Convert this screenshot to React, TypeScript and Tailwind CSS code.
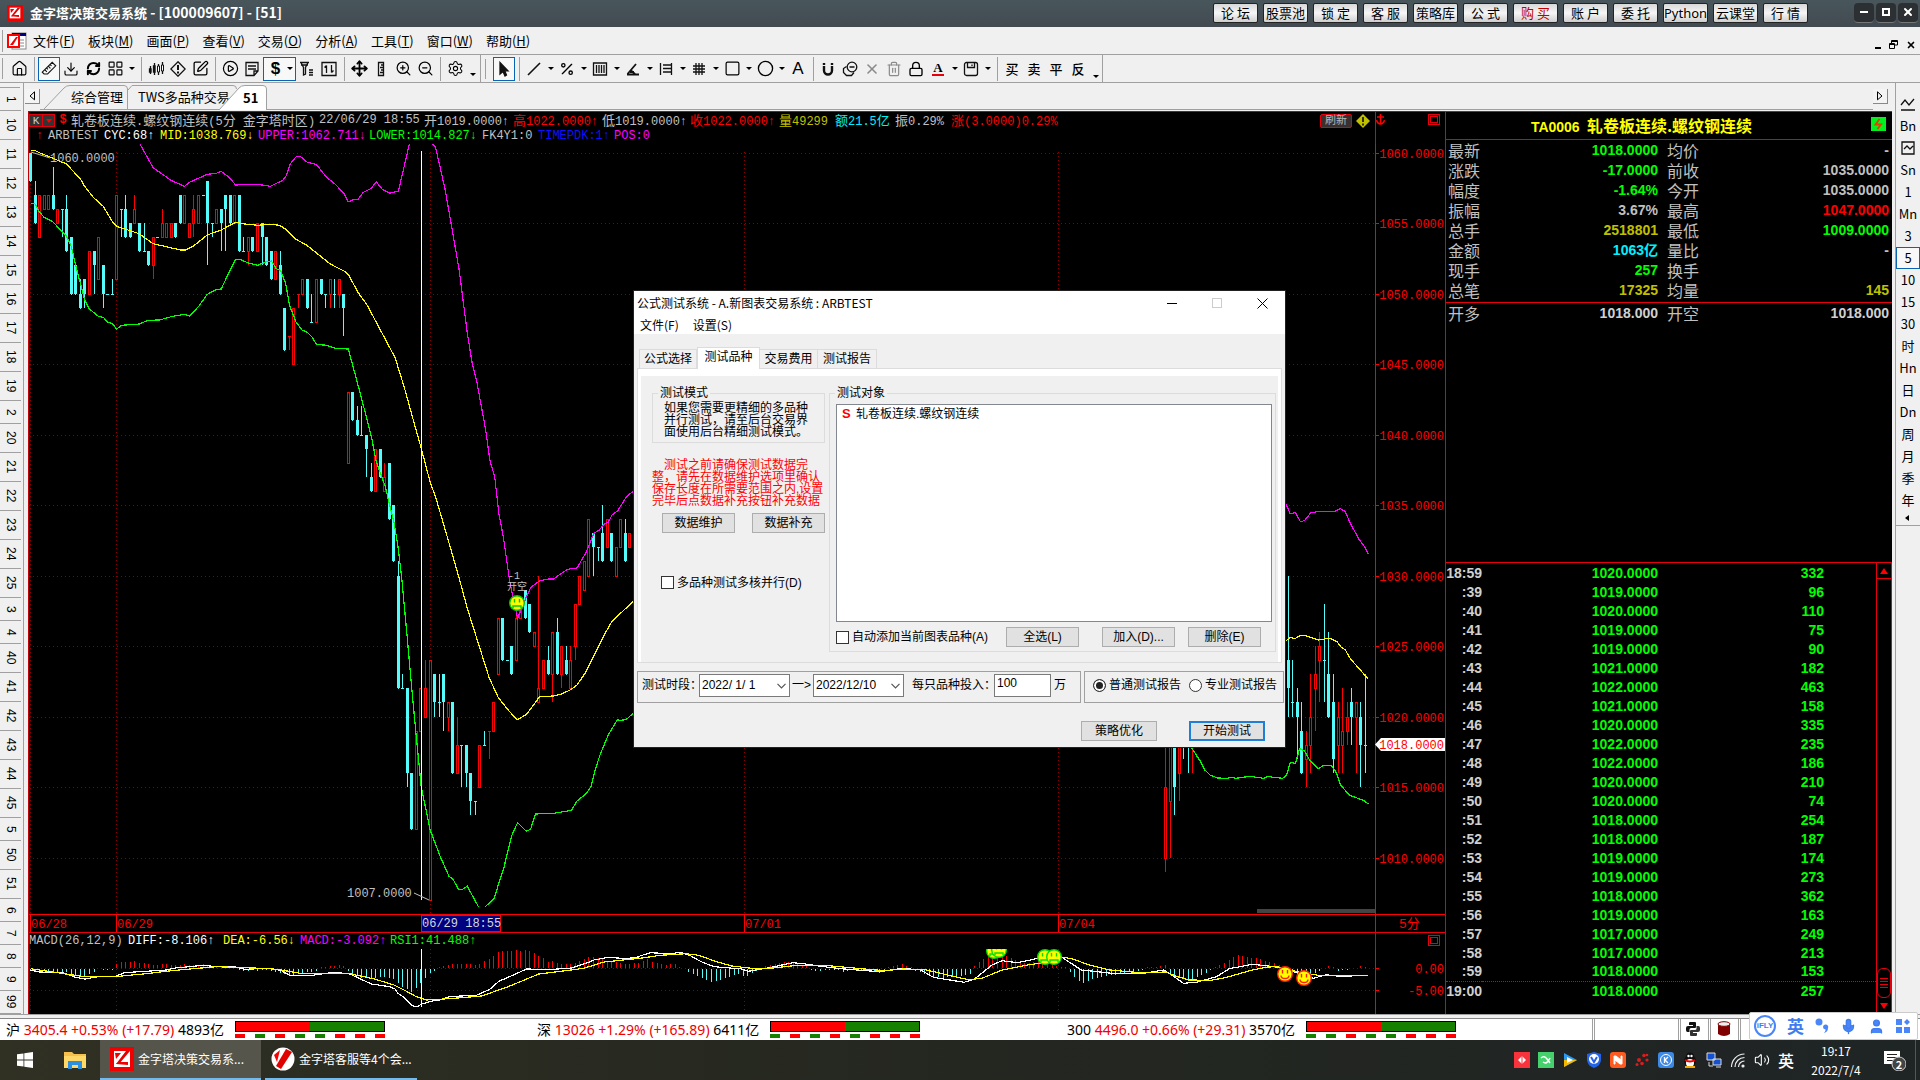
import React from 'react';
import {
  Home, Download, RefreshCw, LayoutGrid, SquarePen, CirclePlay, StickyNote, Move,
  ZoomIn, ZoomOut, Settings, Percent, Trash2, Lock, Square, Circle, X, Mic, User, Volume2,
} from 'lucide-react';

const SANS = "font-['Noto_Sans_CJK_SC',sans-serif]";
const MONO = "font-['Liberation_Mono','Noto_Sans_CJK_SC',monospace]";

/* ---------- helpers ---------- */

function Mixed({ text }: { text: string }) {
  return (
    <>
      {text.split(/([\u4e00-\u9fff]+)/).map((p, i) =>
        i % 2 ? (
          <span key={i} className="font-['Noto_Sans_CJK_SC',sans-serif] text-[13px]">{p}</span>
        ) : (
          <span key={i}>{p}</span>
        ),
      )}
    </>
  );
}

const Caret = () => (
  <svg viewBox="0 0 6 3" className="h-[3px] w-1.5"><path d="M0 0H6L3 3Z" fill="#000" /></svg>
);

function AppLogo({ className }: { className: string }) {
  return (
    <svg viewBox="0 0 24 24" className={className} aria-hidden="true">
      <rect width="24" height="24" fill="#f00000" />
      <rect x="4" y="4" width="16" height="16" fill="#fff" />
      <path d="M6 17 L16 4 L20 4 L9 17Z" fill="#e00000" />
      <path d="M5 6 L11 6 L6 12Z M6 17 L9 15 L18 15 L18 18Z" fill="#f00000" />
    </svg>
  );
}

/* ---------- title bar ---------- */

const quick = ['论 坛', '股票池', '锁 定', '客 服', '策略库', '公 式', '购 买', '账 户', '委 托', 'Python', '云课堂', '行 情'];

function TitleBar() {
  return (
    <header className="flex h-[27px] shrink-0 items-center bg-gradient-to-b from-[#48565c] to-[#424a50] pb-0.5 pl-[7px] text-white">
      <AppLogo className="size-4" />
      <h1 className="ml-[7px] whitespace-pre text-[13px] font-bold">
        金字塔决策交易系统<span className="text-[14px]"> - [100009607] - [51]</span>
      </h1>
      <nav className="ml-auto flex gap-[5px]">
        {quick.map((q) => (
          <button
            key={q}
            className={`h-5 w-[45px] whitespace-pre rounded-[2px] border border-[#222] bg-gradient-to-b from-[#d8d8d8] via-[#f6f6f6] to-[#cfcfcf] text-[13px] leading-4 ${q === 'Python' ? "font-['Noto_Sans'] text-[12px]" : ''} ${q === '购 买' ? 'text-[#c00000]' : 'text-black'}`}
          >
            {q}
          </button>
        ))}
      </nav>
      <div className="ml-[46px] mr-0.5 flex gap-0.5">
        <button aria-label="最小化" className="flex size-5 items-center justify-center rounded-[4px] border-b border-[#777] bg-[#2c3032]"><i className="h-0.5 w-2 bg-white" /></button>
        <button aria-label="最大化" className="flex size-5 items-center justify-center rounded-[4px] border-b border-[#777] bg-[#2c3032]"><i className="size-2 border-2 border-white" /></button>
        <button aria-label="关闭" className="flex size-5 items-center justify-center rounded-[4px] border-b border-[#777] bg-[#2c3032]"><X size={12} strokeWidth={4} /></button>
      </div>
    </header>
  );
}

/* ---------- menu ---------- */

const menus = [['文件', 'F'], ['板块', 'M'], ['画面', 'P'], ['查看', 'V'], ['交易', 'O'], ['分析', 'A'], ['工具', 'T'], ['窗口', 'W'], ['帮助', 'H']];

function MenuBar() {
  return (
    <nav className="flex h-[27px] shrink-0 items-center bg-[#f0f0f0] pl-0.5 text-[13px] text-black">
      <i className="h-[22px] w-px bg-[#a0a0a0]" />
      <svg viewBox="0 0 20 18" className="ml-1 mr-1.5 h-[18px] w-5">
        <rect x="5" y="1" width="14" height="16" fill="#fff" stroke="#888" /><rect x="5" y="1" width="14" height="3" fill="#000080" />
        <path d="M13 8h4M13 11h4M13 14h4" stroke="#888" />
        <rect x="1" y="3" width="11" height="12" fill="#fff" stroke="#f00" strokeWidth="2" /><path d="M3 13L9 5h2L6 13Z" fill="#e00" />
      </svg>
      <div className="flex gap-[13px]">
        {menus.map(([t, k]) => (
          <button key={k}>{t}(<u>{k}</u>)</button>
        ))}
      </div>
      <div className="ml-auto mr-1 mt-2 flex items-center gap-2">
        <i className="mt-1.5 h-0.5 w-[6px] bg-black" />
        <svg viewBox="0 0 9 9" className="size-[9px]" fill="none" stroke="#000"><path d="M2.500 3V.5H8.500V5H6M2.500 1.500H8.500M.5 3.500h5v5h-5zM.5 4.500h5" /></svg>
        <X size={10} strokeWidth={4} />
      </div>
    </nav>
  );
}

/* ---------- tool bar ---------- */

const ic = 'size-[17px]';
const G = ({ children, fill = 'none', stroke = '#111' }: { children: React.ReactNode; fill?: string; stroke?: string }) => (
  <svg viewBox="0 0 16 16" className="size-4" fill={fill} stroke={stroke} strokeWidth="1.300">{children}</svg>
);

function Tool({ label, children, on }: { label: string; children: React.ReactNode; on?: boolean }) {
  return (
    <button aria-label={label} className={`flex h-6 w-[22px] shrink-0 items-center justify-center ${on ? 'border border-[#0a64b4] bg-[#f8f8f8]' : ''}`}>
      {children}
    </button>
  );
}
const Drop = () => <button aria-label="展开" className="flex h-6 w-[11px] shrink-0 items-center justify-center"><Caret /></button>;
const Sep = () => <span className="flex w-2 shrink-0 justify-center"><i className="h-6 w-px bg-[#a0a0a0]" /></span>;

function ToolBar() {
  return (
    <div className="flex h-[29px] shrink-0 items-center border-y border-[#a0a0a0] bg-[#f0f0f0] text-black">
      <span className="w-2 pl-0.5"><i className="block h-[21px] w-px bg-[#a0a0a0]" /></span>
      <Tool label="主页"><Home className={ic} strokeWidth={1.6} /></Tool>
      <Sep />
      <Tool label="画线" on><G><g transform="rotate(-45 8 8)" strokeWidth="1.100"><path d="M1 5.500h14v5H3.500L1 8zM4.500 5.500v3M7 5.500v2M9.500 5.500v3M12 5.500v2" /></g></G></Tool>
      <Tool label="下载"><Download className="size-4" strokeWidth={1.7} /></Tool>
      <Tool label="刷新"><RefreshCw className="size-[15px]" strokeWidth={3.2} /></Tool>
      <Tool label="布局"><LayoutGrid className={ic} strokeWidth={1.6} /></Tool>
      <Drop /><Sep />
      <Tool label="K线"><G fill="#111"><path d="M2.500 5v8M6.500 2v12M10.500 3v11M14.500 1v12" /><path d="M1.500 8h1.500v3h-1.500zM5.500 5h1.500v6h-1.500z" /><path d="M9.500 5h2v6h-2zM13.500 4h2v6h-2z" fill="#fff" strokeWidth="1" /></G></Tool>
      <Tool label="预警"><G><path d="M8 .8L15.200 8 8 15.200.8 8z" /><path d="M8 4v5M8 10.500v2" strokeWidth="2" /></G></Tool>
      <Tool label="编辑"><SquarePen className={ic} strokeWidth={1.8} /></Tool>
      <Sep />
      <Tool label="回放"><CirclePlay className={ic} strokeWidth={1.7} /></Tool>
      <Tool label="便笺"><G><path d="M2 1.500h12V10l-4 4.500H2zM4 5h8M4 8h8M14 10h-4v4" /></G></Tool>
      <div className="flex h-6 w-[33px] items-center border border-[#0a64b4] bg-[#f8f8f8]">
        <button className="w-[23px] font-['Liberation_Sans'] text-[17px] font-bold leading-5">$</button><Caret />
      </div>
      <Tool label="筛选"><G><path d="M1 1.500h9M2 4h7M2 1.500l2.500 5V14l2-1V6.500L9 1.500M10 9h4M10 11.500h4M10 14h4" /></G></Tool>
      <Tool label="排序"><G><path d="M1 1.500h14v13H1zM5.500 12V4.500M3.500 6.500l2-2M10.500 4v7.500M12.500 9.500l-2 2" /></G></Tool>
      <Sep />
      <Tool label="移动"><Move className={ic} strokeWidth={2.600} /></Tool>
      <Tool label="标尺"><G><path d="M5.500 1.500h5v13h-5zM8 4h2.500M7 6.500h3.500M8 9h2.500M7 11.500h3.500" /></G></Tool>
      <Tool label="放大"><ZoomIn className={ic} strokeWidth={1.7} /></Tool>
      <Tool label="缩小"><ZoomOut className={ic} strokeWidth={1.7} /></Tool>
      <Sep />
      <Tool label="设置"><Settings className={ic} strokeWidth={1.5} /></Tool>
      <span className="flex w-[14px] justify-center pt-3"><Caret /></span>
      <span className="flex w-[13px] gap-1"><i className="h-7 w-px bg-[#a0a0a0]" /><i className="mt-1 h-5 w-px bg-[#a0a0a0]" /></span>
      <Tool label="选择" on><G fill="#111"><path d="M4 1.500V13l3-2.500L9 15l1.500-1L8.700 9.800H12z" /></G></Tool>
      <Sep />
      <Tool label="直线"><G><path d="M2 14L14 2" strokeWidth="1.600" /></G></Tool><Drop />
      <Tool label="百分比"><Percent className="size-4" strokeWidth={2} /></Tool><Drop />
      <Tool label="周期线"><G><path d="M1.500 2h13v12h-13zM4.500 4v8M7 4v8M9.500 4v8M12 4v8" /></G></Tool><Drop />
      <Tool label="角度"><G><path d="M2 13.500h12M2.500 13L11 3M6 9.500l4 3.500M5 11h4" strokeWidth="1.800" /></G></Tool><Drop />
      <Tool label="区间"><G><path d="M2.500 2v12M13.500 2v12M5 4h8M5 7.500h8M5 11h8" /></G></Tool><Drop />
      <Tool label="网格"><G><path d="M5 2v12M8 2v12M11 2v12M2 5h12M2 8h12M2 11h12" /></G></Tool><Drop />
      <Tool label="矩形"><Square className={ic} strokeWidth={1.700} /></Tool><Drop />
      <Tool label="圆形"><Circle className={ic} strokeWidth={1.900} /></Tool><Drop />
      <Tool label="文字"><span className="font-['Liberation_Sans'] text-[17px]">A</span></Tool>
      <Sep />
      <Tool label="磁铁"><G><path d="M4 5v4.500a4 4 0 008 0V5M4 2v2M12 2v2" strokeWidth="2.400" /></G></Tool>
      <Tool label="复制"><G><circle cx="10" cy="6" r="4.800" /><path d="M4.500 5.500l-3 2v4l3 3h5l2.500-3M7.500 6h5" /></G></Tool>
      <Tool label="删除"><X className="size-4 text-[#8a8a8a]" strokeWidth={2.400} /></Tool>
      <Tool label="清空"><Trash2 className="size-4 text-[#8a8a8a]" strokeWidth={1.800} /></Tool>
      <Tool label="锁定"><Lock className="size-4" strokeWidth={2} /></Tool>
      <Tool label="颜色"><span className="border-b-2 border-red-600 px-px font-['Liberation_Serif'] text-[13px] font-bold leading-3">A</span></Tool><Drop />
      <Tool label="保存"><G><rect x="1.500" y="1.500" width="13" height="13" rx="2" /><path d="M4.500 2v4.500h7V2M9 3.500v1.500" /></G></Tool><Drop />
      <Sep />
      {['买', '卖', '平', '反'].map((t) => (
        <button key={t} className="w-[22px] text-[13px] font-medium">{t}</button>
      ))}
      <span className="flex h-7 w-[14px] justify-center border-r border-[#a0a0a0] pt-5"><Caret /></span>
    </div>
  );
}

/* ---------- left and right strips ---------- */

const leftNums = ['1', '10', '11', '12', '13', '14', '15', '16', '17', '18', '19', '2', '20', '21', '22', '23', '24', '25', '3', '4', '40', '41', '42', '43', '44', '45', '5', '50', '51', '6', '7', '8', '9', '99'];

function LeftStrip() {
  return (
    <aside className="flex w-6 shrink-0 flex-col overflow-hidden border-r border-[#a0a0a0] bg-[#f0f0f0] pt-1 text-black">
      <i className="h-px w-5 shrink-0 bg-[#a0a0a0]" />
      {leftNums.map((n) => (
        <button
          key={n}
          className={`flex w-[21px] shrink-0 items-center justify-center border-b border-[#a0a0a0] font-['Liberation_Sans'] text-[12px] [writing-mode:vertical-rl] ${n.length > 1 && n !== '99' ? 'h-[29px]' : 'h-[23px]'}`}
        >
          {n}
        </button>
      ))}
    </aside>
  );
}

const rightItems = ['~', 'Bn', '#', 'Sn', '1', 'Mn', '3', '5', '10', '15', '30', '时', 'Hn', '日', 'Dn', '周', '月', '季', '年'];

function RightStrip() {
  return (
    <aside className="w-6 shrink-0 bg-[#f0f0f0] text-black">
      <div className="flex flex-col border-b border-[#a0a0a0] pb-1 pt-[10px]">
        {rightItems.map((t) => (
          <button
            key={t}
            className={`flex h-[22px] items-center justify-center text-[13px] ${t === '5' ? 'border border-[#0a64b4] bg-[#f8f8f8]' : ''}`}
          >
            {t === '~' ? <G><path d="M1 9l4-5 4 5 5-6M1 14h14" /></G> : t === '#' ? <svg viewBox="0 0 14 14" className="size-3.5" fill="none" stroke="#111" strokeWidth="1.300"><path d="M1 1h12v12H1zM3 8l3-3 3 3 3-3" /></svg> : t}
          </button>
        ))}
        <svg viewBox="0 0 4 6" className="ml-[9px] mt-1 h-1.5 w-1"><path d="M4 0v6L0 3z" /></svg>
      </div>
    </aside>
  );
}

/* ---------- tabs ---------- */

function TabRow() {
  return (
    <div className="flex h-[27px] shrink-0 items-end bg-[#f0f0f0] text-black">
      <button aria-label="向左" className="mb-1.5 ml-px flex size-[15px] items-center justify-center border-b border-r border-[#888] bg-[#f4f4f4]">
        <svg viewBox="0 0 6 10" className="h-2.5 w-1.5" fill="none" stroke="#000"><path d="M5.500.8v8L1 5z" /></svg>
      </button>
      <div className="flex flex-1 items-end border-b border-[#a0a0a0] pl-1">
        <button className="relative h-6 w-[84px] pl-[27px] text-left text-[13px]">
          <svg viewBox="0 0 84 24" className="absolute inset-0 size-full" fill="none" stroke="#a0a0a0"><path d="M0 24L20 3Q22 .5 26 .5H80Q83.500.5 83.500 4V24" /></svg>
          <span className="relative whitespace-nowrap">综合管理</span>
        </button>
        <button className="relative h-6 w-[110px] pl-2.5 text-left text-[13px]">
          <svg viewBox="0 0 110 24" className="absolute inset-0 size-full" fill="none" stroke="#a0a0a0"><path d="M0 5L4 .5H105Q108.500.5 108.500 4" /></svg>
          <span className="relative whitespace-nowrap">TWS多品种交易</span>
        </button>
        <button className="relative -mb-px -ml-[19px] h-[25px] w-12 pl-6 text-left text-[13px] font-bold">
          <svg viewBox="0 0 48 25" className="absolute inset-0 size-full" fill="#fff" stroke="#a0a0a0"><path d="M0 25L20 3Q22 .5 26 .5H44Q47.500.5 47.500 4V25" /></svg>
          <span className="relative">51</span>
        </button>
      </div>
      <button aria-label="向右" className="mb-1.5 mr-[7px] flex size-[15px] items-center justify-center border-b border-r border-[#888] bg-[#f4f4f4]">
        <svg viewBox="0 0 6 10" className="h-2.5 w-1.5" fill="none" stroke="#000"><path d="M.5.8v8L5 5z" /></svg>
      </button>
    </div>
  );
}

/* ---------- chart data ---------- */

/* kind (c falling, r rising), high, body top, body bottom, low; prices minus 1000 */
const candlesA = `c60 60 58 58,c58 57 55 55,r57 57 54 54,r57 57 56 56,r57 57 56 56,c59 57 56 56,r56 56 55 55,c56 56 56 54,c57 56 53 53,c54 54 50 50,
c52 52 50 50,c51 50 49 49,c51 51 50 49,r53 53 50 50,c53 53 52 50,r54 54 51 51,c52 52 50 49,c50 50 50 50,c51 50 50 50,r57 57 51 51,
c56 56 56 54,c57 56 54 54,c55 55 54 54,r57 56 55 55,c55 55 53 53,c55 53 53 53,c53 53 52 52,r54 54 52 51,c54 54 54 54,r56 55 54 54,
r55 55 54 54,r55 55 54 54,c55 55 54 54,c57 57 55 55,r57 57 55 55,r55 55 54 54,r57 56 55 54,r57 57 55 55,c57 57 57 57,c58 58 55 52,
c55 55 55 54,r56 56 55 55,c56 56 55 53,c57 57 56 53,c57 57 55 55,r57 57 55 55,c57 57 53 53,c54 53 53 53,r54 54 53 52,c54 54 53 53,
r55 55 53 53,c55 55 54 52,c54 54 52 52,c53 53 51 51,r53 53 51 51,c53 52 50 50,c49 49 46 46,r47 47 47 46,r49 49 45 45,r50 50 50 49,
r51 51 50 50,c51 51 49 49,c50 48 48 48,r51 51 48 48,c51 51 50 50,c50 50 50 49,r51 51 50 49,c51 50 50 49,r51 51 50 49,c50 50 49 47,
r43 43 38 38,c43 43 41 41,c42 41 40 40,c42 40 40 40,c40 40 39 37,c38 37 36 36,r39 39 36 36,c39 39 37 37,r38 37 36 36,c38 38 34 34,
c35 35 31 31,c31 30 22 22,c23 22 22 22,c22 22 16 15,c16 16 12 12,r19 19 12 12,r22 22 19 19,r24 22 20 20,r24 24 7 7,c23 23 21 20,
c23 21 21 20,c23 23 21 19,r21 21 20 19,c21 21 16 16,r20 18 16 16,c18 18 18 15,c18 18 16 15,c16 16 14 13,c14 14 14 13,r18 18 15 15,
c19 18 18 18,r19 19 19 17,r21 21 19 19,r27 27 23 23,c27 27 24 24,c24 24 24 24,c25 25 23 23,r28 27 24 24,r28 28 27 27,c29 29 27 27,
c28 28 26 26,r26 26 25 25,r30 22 21 21,r24 24 22 22,c25 24 23 23,r26 26 23 21,c27 26 23 23,r25 25 23 22,c25 24 23 23,r25 24 22 22,
r28 28 25 24,r30 30 28 28,r31 31 29 29,r34 34 30 30,c33 33 32 30,c32 32 32 31,c35 33 31 31,r34 34 32 32,c33 33 31 31,r32 32 30 30,
r34 34 32 32,c34 33 31 31,r33 33 32 32`;
const candlesB = 'r20 15 10 9,r20 20 14 10,c20 20 15 13,r20 19 16 14,c20 19 18 17,c20 19 18 16,r20 19 18 16';
const candlesC = `c25 22 21 19,c30 24 22 20,c24 21 21 20,c22 21 20 17,c21 19 16 16,r19 18 17 15,r23 20 18 16,r25 23 22 19,r26 25 24 21,c28 24 24 21,
c26 23 20 20,c23 21 17 16,r21 20 18 16,r22 19 18 16,r21 20 19 18,c22 21 20 18,r21 21 20 16,c21 20 18 15,c23 18 18 16`;

const barX = (i: number) => 30 + i * 4.54;
const priceY = (p: number) => 152.5 + (60 - p) * 14.1;

function Candles({ data, from }: { data: string; from: number }) {
  return (
    <g shapeRendering="crispEdges">
      {data.split(',').map((s, i) => {
        const row = s.trim();
        const up = row[0] === 'r';
        const [h, t, b, l] = row.slice(1).split(' ').map(Number);
        const x = Math.round(barX(from + i));
        const top = Math.round(priceY(t));
        const bot = Math.round(priceY(b));
        const color = up ? '#ff0000' : '#54fcfc';
        return (
          <g key={i} fill={color}>
            <rect x={x} y={Math.round(priceY(h))} width="1" height={Math.max(1, top - Math.round(priceY(h)))} />
            <rect x={x} y={bot} width="1" height={Math.max(1, Math.round(priceY(l)) - bot)} />
            {bot === top ? (
              <rect x={x - 1} y={top} width="3" height="1" />
            ) : up ? (
              <rect x={x - 0.5} y={top + 0.5} width="2" height={bot - top} fill="#000" stroke={color} />
            ) : (
              <rect x={x - 1} y={top} width="3" height={bot - top} />
            )}
          </g>
        );
      })}
    </g>
  );
}

type Frame = [number, number, number, number];
const LEFT: Frame = [0, 140, 2.45, 3];
const EAST: Frame = [1280, 480, 2.45, 2.904];
const SOUTH: Frame = [640, 740, 1.96, 3];
const MACD: Frame = [0, 560, 2.45, 3];

function Trace({ pts, f, color }: { pts: string; f: Frame; color: string }) {
  const d = pts
    .split(' ')
    .map((p) => {
      const [x, y] = p.split(',').map(Number);
      return `${(f[0] + x / f[2]).toFixed(1)},${(f[1] + y / f[3]).toFixed(1)}`;
    })
    .join(' ');
  return <polyline points={d} fill="none" stroke={color} strokeWidth="1.200" shapeRendering="crispEdges" />;
}

const midA = '75,31 85,31 96,38 130,55 163,72 197,117 208,140 230,174 253,199 275,244 286,259 341,281 375,311 442,330 455,330 475,317 508,285 542,270 577,247 599,252 631,256 665,253 685,256 700,268 725,298 752,316 809,372 844,394 855,407 878,459 898,492 922,547 968,653 990,740 1010,828 1032,925 1054,1027 1067,1070 1090,1166 1125,1315 1145,1405 1166,1487 1199,1615 1221,1673 1245,1710 1267,1740 1290,1723 1322,1670 1356,1668 1378,1661 1400,1648 1414,1635 1436,1595 1457,1542 1480,1485 1500,1443 1560,1375';
const lowA = '75,190 85,190 96,215 108,232 130,246 163,289 175,320 185,375 197,430 207,478 219,507 241,529 253,532 264,547 275,550 286,568 297,556 341,552 363,541 391,540 419,530 452,523 464,528 486,500 508,463 530,449 542,447 560,400 577,358 589,359 609,369 631,376 653,365 665,363 677,386 687,391 700,430 709,495 725,545 740,570 753,577 765,592 775,613 800,616 822,625 853,627 865,680 888,785 910,890 922,965 944,1040 954,1092 965,1145 975,1220 984,1310 998,1495 1010,1660 1020,1790 1032,1940 1054,2070 1077,2145 1100,2209 1110,2218 1123,2248 1133,2248 1145,2239 1172,2300';
const lowA2 = '1189,2300 1211,2275 1222,2230 1233,2190 1245,2130 1255,2083 1268,2048 1290,2074 1300,2068 1312,2022 1356,2020 1400,2011 1414,1983 1436,1961 1448,1940 1458,1890 1470,1845 1490,1785 1512,1740 1523,1741 1535,1738 1560,1710';
const upA = '343,12 375,83 419,121 452,139 464,127 508,103 530,100 542,94 564,115 577,135 631,133 663,139 677,130 692,122 702,106 711,72 725,51 735,48 753,67 775,73 800,112 822,133 844,163 853,186 865,179 877,178 890,157 910,145 922,125 936,147 955,160 976,153 1003,12';
const upA2 = '1060,12 1067,22 1090,145 1110,285 1125,390 1145,580 1157,670 1169,730 1190,870 1200,960 1212,1010 1222,1120 1233,1190 1248,1318 1255,1360 1268,1435 1290,1370 1300,1343 1322,1322 1345,1317 1356,1317 1390,1288 1414,1284 1436,1237 1455,1180 1468,1170 1480,1153 1490,1147 1500,1124 1513,1113 1535,1070 1560,1045';
const upC = '8,50 13,65 25,98 38,95 50,121 60,118 75,96 90,92 132,92 148,83 160,92 172,125 195,175 205,190 216,214';
const midC = '8,472 25,458 38,460 50,451 62,452 94,465 116,460 128,462 140,470 150,486 160,493 170,515 182,532 205,563 216,577';
const lowC = '0,865 5,867 16,858 25,820 38,823 48,780 60,787 72,812 94,838 105,830 126,829 138,850 148,885 170,915 190,924 205,931 216,941';
const lowB = '1078,15 1088,40 1098,63 1107,90 1118,106 1132,114 1150,115 1160,112 1168,115 1195,109 1222,115 1232,109 1240,112 1254,114';

const diffA = '75,1230 96,1236 155,1238 185,1252 208,1257 240,1250 280,1250 305,1238 341,1235 408,1230 430,1224 498,1216 530,1220 577,1221 600,1228 660,1225 690,1232 709,1246 765,1246 810,1238 853,1240 880,1255 910,1272 955,1280 968,1287 975,1300 990,1312 1010,1337 1023,1340 1032,1333 1055,1324 1077,1320 1100,1310 1130,1308 1167,1306 1200,1288 1222,1264 1245,1252 1290,1227 1320,1228 1356,1228 1400,1224 1440,1208 1455,1200 1490,1192 1535,1196 1568,1190';
const deaA = '75,1226 140,1238 208,1250 280,1250 350,1242 430,1231 530,1220 640,1225 680,1228 740,1241 853,1240 920,1258 965,1275 990,1290 1020,1310 1045,1320 1100,1316 1180,1308 1245,1280 1320,1242 1400,1230 1430,1225 1480,1206 1568,1195';
const diffB = '0,648 20,638 60,641 80,637 100,648 120,665 145,680 200,687 212,694 250,684 300,668 320,671 360,680 400,687 470,695 515,685 550,690 575,712 635,727 655,718 690,675 710,662 740,668 780,655 790,640 825,650 845,670 865,690 925,700 990,699 1027,690 1045,708 1065,730 1090,727 1130,710 1155,686 1200,673 1230,678 1250,682 1270,690 1300,705 1320,715 1345,704 1370,709 1395,708';
const deaB = '0,655 40,646 90,641 115,646 150,665 180,678 225,686 260,684 310,676 370,677 440,687 480,692 515,687 560,689 610,708 645,719 670,715 710,690 760,675 790,668 830,652 850,658 880,675 920,690 980,698 1030,696 1050,708 1075,720 1120,721 1150,712 1200,690 1230,681 1250,680 1300,700 1330,706 1427,706';

const histogram = [
  -1, -2, -2, -2, -2, -3, -3, -3, -3, -5, -6, -7, -7, -5, -3, 0, -1, -1, -1, 4, 6, 6, 6, 7, 5, 5, 4, 3, 3, 4, 4, 3, 3, 3, 4, 3, 3, 3, 4, 2, 2, 1, 1, 1, 1, 1,
  -1, -2, -2, -1, -2, -1, -1, -2, -3, -4, -5, -6, -6, -5, -4, -3, -3, -2, 1, 1, 2, 2, 3, 2, -2, -5, -7, -9, -9, -9, -9, -8, -8, -9, -10, -14, -18, -20, -23, -19, -14, -9, -4, -2,
  1, 2, 3, 4, 4, 4, 4, 4, 3, 4, 7, 9, 12, 16, 17, 17, 17, 18, 17, 18, 17, 15, 12, 10, 6, 7, 5, 4, 4, 4, 5, 7, 9, 11, 11, 10, 9, 6, 7, 6, 5, 4, 4, 5,
  5, 7, 9, 6, 5, 4, 3, 4, 4, 1, 0, -3, -5, -7, -9, -11, -13, -12, -11, -9, -8, -6, -5, -7, -7, -4, -2, 0, 2, 3, 4, 5, 6, 6, 5, 4, 3, 2, -1, -2, -2, -1, -1, -1, -1, -3, -2, -1, -1, -1, -2, -2, -3, -4, -2,
  1, 2, 3, 4, 2, 1, -2, -3, -5, -7, -8, -8, -9, -8, -8, -7, -7, -6, -5, 2, 6, 9, 11, 14, 15, 13, 12, 10, 8, 6, 5, 5, 6, 7, 8, 5, 4, 2, 1, 1,
  -3, -8, -12, -14, -12, -10, -9, -8, -7, -6, -6, -5, -4, -3, -3, -2, -1, 1, 1, 1, 2, 3, -5, -7, -9, -10, -11, -10, -8, -6, -4, -1, 1, 3, 5, 8, 11, 13, 12, 11, 10, 10, 9, 7, 6, 5, 3, 1, -2, -4, -5, -6, -7, -6, -4, -2, 0, 2, 1, -2, -1, -1, 0, 0, 2, 1,
];

function Face({ x, y, ring, sad }: { x: number; y: number; ring: string; sad?: boolean }) {
  return (
    <g stroke={ring} fill="none" strokeWidth="1.400">
      <circle cx={x} cy={y} r="7.300" fill="#ffff00" />
      <path d={`M${x - 2.5} ${y - 4}v3.500M${x + 2.5} ${y - 4}v3.500`} />
      <path d={sad ? `M${x - 4} ${y + 5}v-2h8v2` : `M${x - 4} ${y + 1.5}q0 3 4 3t4-3`} />
    </g>
  );
}

const gridX = [30.5, 116.5, 430.5, 744.5, 1058.5];
const levels = [60, 55, 50, 45, 40, 35, 30, 25, 20, 15, 10];
const AXIS = "font-['Liberation_Mono','Noto_Sans_CJK_SC',monospace]";

function PriceChart() {
  return (
    <svg viewBox="29 144 1416 788" className="block min-h-0 w-full flex-1" role="img" aria-label="K线图">
      <g stroke="#8c0000" strokeDasharray="1 3" shapeRendering="crispEdges">
        {levels.map((p) => (
          <line key={p} x1="29" x2="1375" y1={Math.round(priceY(p)) + 0.5} y2={Math.round(priceY(p)) + 0.5} />
        ))}
        {gridX.map((x) => <line key={x} x1={x} x2={x} y1="152" y2="913" />)}
      </g>
      <Candles data={candlesA} from={0} />
      <Candles data={candlesB} from={250} />
      <Candles data={candlesC} from={276} />
      <Trace pts={upA} f={LEFT} color="#ff00ff" />
      <Trace pts={upA2} f={LEFT} color="#ff00ff" />
      <Trace pts={midA} f={LEFT} color="#ffff00" />
      <Trace pts={lowA} f={LEFT} color="#00ff00" />
      <Trace pts={lowA2} f={LEFT} color="#00ff00" />
      <Trace pts={lowB} f={SOUTH} color="#00ff00" />
      <Trace pts={upC} f={EAST} color="#ff00ff" />
      <Trace pts={midC} f={EAST} color="#ffff00" />
      <Trace pts={lowC} f={EAST} color="#00ff00" />
      <rect x="421" y="151" width="1" height="749" fill="#fff" />
      <g className={AXIS} fontSize="12" fill="#c0c0c0">
        <path d="M31 152L50 158M414 893L429 900" stroke="#c0c0c0" />
        <text x="50" y="162">1060.0000</text>
        <text x="347" y="897">1007.0000</text>
        <text x="508" y="579" fontSize="10">-1</text>
        <text x="507" y="590" fontSize="10">开空</text>
      </g>
      <Face x={517} y={603} ring="#00c800" sad />
      <g stroke="#ff0000" shapeRendering="crispEdges">
        <path d="M1375.500 144V932M28 914.500H1445M30.500 914v18M116.500 914v18M744.500 914v18M1058.500 914v18" />
        {levels.map((p) => (
          <line key={p} x1="1376" x2="1379" y1={Math.round(priceY(p)) + 0.5} y2={Math.round(priceY(p)) + 0.5} />
        ))}
      </g>
      <g className={AXIS} fontSize="12" fill="#ff0000">
        {levels.map((p) => (
          <text key={p} x="1444" y={Math.round(priceY(p)) + 5} textAnchor="end">{`10${p}.0000`}</text>
        ))}
        <path d="M1375 744.500L1381 738H1445V751H1381Z" fill="#fff" />
        <text x="1444" y="749" textAnchor="end">1018.0000</text>
        <text x="31" y="928">06/28</text>
        <text x="117" y="928">06/29</text>
        <text x="745" y="928">07/01</text>
        <text x="1059" y="928">07/04</text>
        <text x="1399" y="928" fontSize="13">5分</text>
        <rect x="421.500" y="915.500" width="79" height="16" fill="#000080" stroke="#ff0000" />
        <text x="422" y="927" fill="#d8d8d8">06/29 18:55</text>
      </g>
      <rect x="1257" y="909" width="118" height="4" fill="#444" />
    </svg>
  );
}

function MacdChart() {
  return (
    <svg viewBox="29 949 1416 65" className="block h-[65px] w-full shrink-0" role="img" aria-label="MACD">
      <g stroke="#8c0000" strokeDasharray="1 3" shapeRendering="crispEdges">
        <path d="M29 968.500H1375M29 990.500H1375" />
        {gridX.map((x) => <line key={x} x1={x} x2={x} y1="949" y2="1012" />)}
      </g>
      <g shapeRendering="crispEdges">
        {histogram.map((v, i) =>
          v ? <rect key={i} x={Math.round(barX(i))} y={v > 0 ? 968 - v : 969} width="1" height={Math.abs(v)} fill={v > 0 ? '#ff0000' : '#54fcfc'} /> : null,
        )}
      </g>
      <Trace pts={diffA} f={MACD} color="#ffffff" />
      <Trace pts={diffB} f={SOUTH} color="#ffffff" />
      <Trace pts={deaA} f={MACD} color="#ffff00" />
      <Trace pts={deaB} f={SOUTH} color="#ffff00" />
      <rect x="421" y="949" width="1" height="58" fill="#fff" />
      <Face x={994} y={951} ring="#00e000" sad />
      <Face x={999} y={950} ring="#00e000" sad />
      <Face x={1045} y={957} ring="#00e000" sad />
      <Face x={1054} y={957} ring="#00e000" sad />
      <Face x={1285} y={974} ring="#ff2000" />
      <Face x={1304} y={978} ring="#ff2000" />
      <path d="M1375.500 949V1014M1376 968.500h3M1376 990.500h3" stroke="#f00" />
      <g className={AXIS} fontSize="12" fill="#ff0000" textAnchor="end">
        <text x="1444" y="973">0.00</text>
        <text x="1444" y="995">-5.00</text>
      </g>
    </svg>
  );
}

const BoxIcon = () => (
  <span className="flex h-[11px] w-3 items-center justify-center border border-red-600"><i className="h-[7px] w-2 border border-red-600" /></span>
);

const Seg = ({ w, c, t }: { w: string; c: string; t: string }) => (
  <span className={`shrink-0 whitespace-pre ${w} ${c}`}><Mixed text={t} /></span>
);

function ChartPanel() {
  return (
    <section className="flex min-w-0 flex-1 flex-col border-l border-t border-red-700 bg-black">
      <div className={`flex h-8 shrink-0 ${MONO} text-[12px] leading-[15px]`}>
        <div className="min-w-0 flex-1 border-r border-red-600">
          <div className="flex h-[17px] items-center">
            <button className="flex h-[13px] w-[26px] items-center border border-red-600 bg-[#333] text-[11px] leading-3 text-[#ccc]">
              <span className="w-3">K</span><span className="flex flex-1 justify-center border-l border-red-600"><svg viewBox="0 0 6 4" className="h-3 w-1.5"><path d="M0 0h6L3 4z" fill="#f00" /></svg></span>
            </button>
            <span className="w-4 text-center font-bold text-[#ff0000]">$</span>
            <Seg w="w-[248px]" c="text-[#c0c0c0]" t="轧卷板连续.螺纹钢连续(5分 金字塔时区)" />
            <Seg w="w-[105px]" c="text-[#c0c0c0]" t="22/06/29 18:55" />
            <Seg w="w-[89px]" c="text-[#c0c0c0]" t="开1019.0000↑" />
            <Seg w="w-[89px]" c="text-[#ff0000]" t="高1022.0000↑" />
            <Seg w="w-[88px]" c="text-[#c0c0c0]" t="低1019.0000↑" />
            <Seg w="w-[89px]" c="text-[#ff0000]" t="收1022.0000↑" />
            <Seg w="w-[56px]" c="text-[#c0c000]" t="量49299" />
            <Seg w="w-[60px]" c="text-[#00f0ff]" t="额21.5亿" />
            <Seg w="w-[56px]" c="text-[#c0c0c0]" t="振0.29%" />
            <Seg w="w-[125px]" c="text-[#ff0000]" t="涨(3.0000)0.29%" />
            <button className="ml-auto h-3.5 w-8 rounded-[2px] border border-red-600 bg-[#3a3030] text-[11px] leading-3 text-[#b8b8b8]">刷新</button>
            <svg viewBox="0 0 14 14" className="ml-1 mr-[5px] size-3.5"><path d="M7 0l7 7-7 7-7-7z" fill="#c0c000" /><path d="M7 3v5M7 9.500v2" stroke="#000" strokeWidth="1.500" /></svg>
          </div>
          <div className="flex h-[15px] items-center pl-[7px]">
            <Seg w="w-[12px]" c="text-[#ff0000] font-bold" t="↑" />
            <Seg w="w-[56px]" c="text-[#c0c0c0]" t="ARBTEST" />
            <Seg w="w-[56px]" c="text-white" t="CYC:68↑" />
            <Seg w="w-[98px]" c="text-[#ffff00]" t="MID:1038.769↓" />
            <Seg w="w-[111px]" c="text-[#ff00ff]" t="UPPER:1062.711↓" />
            <Seg w="w-[113px]" c="text-[#00ff00]" t="LOWER:1014.827↓" />
            <Seg w="w-[56px]" c="text-[#c0c0c0]" t="FK4Y1:0" />
            <Seg w="w-[76px]" c="text-[#1010ff]" t="TIMEPDK:1↑" />
            <Seg w="w-[50px]" c="text-[#ff00ff]" t="POS:0" />
          </div>
        </div>
        <div className="flex w-[69px] justify-between pr-[5px] pt-0.5">
          <svg viewBox="0 0 9 11" className="h-[11px] w-[9px]" fill="none" stroke="#f00" strokeWidth="1.500"><path d="M4.500 0v10M1 3h7M.5 6q1 4 4 4t4-4" /></svg>
          <BoxIcon />
        </div>
      </div>
      <PriceChart />
      <div className={`flex h-[17px] shrink-0 border-t border-red-600 ${MONO} text-[12px] leading-4`}>
        <div className="flex flex-1 items-center border-r border-red-600">
          <Seg w="w-[99px]" c="text-[#c0c0c0]" t="MACD(26,12,9)" />
          <Seg w="w-[95px]" c="text-white" t="DIFF:-8.106↑" />
          <Seg w="w-[77px]" c="text-[#ffff00]" t="DEA:-6.56↓" />
          <Seg w="w-[90px]" c="text-[#ff00ff]" t="MACD:-3.092↑" />
          <Seg w="w-[100px]" c="text-[#00ff00]" t="RSI1:41.488↑" />
        </div>
        <div className="flex w-[69px] justify-end pr-[5px] pt-0.5"><BoxIcon /></div>
      </div>
      <MacdChart />
    </section>
  );
}

/* ---------- quote panel ---------- */

const quotes: [string, string, string, string, string, string][] = [
  ['最新', '1018.0000', 'text-[#00ff00]', '均价', '-', 'text-[#c0c0c0]'],
  ['涨跌', '-17.0000', 'text-[#00ff00]', '前收', '1035.0000', 'text-[#c0c0c0]'],
  ['幅度', '-1.64%', 'text-[#00ff00]', '今开', '1035.0000', 'text-[#c0c0c0]'],
  ['振幅', '3.67%', 'text-[#c0c0c0]', '最高', '1047.0000', 'text-[#ff0000]'],
  ['总手', '2518801', 'text-[#c0c000]', '最低', '1009.0000', 'text-[#00ff00]'],
  ['金额', '1063亿', 'text-[#00f0ff]', '量比', '-', 'text-[#c0c0c0]'],
  ['现手', '257', 'text-[#00ff00]', '换手', '', 'text-[#c0c0c0]'],
  ['总笔', '17325', 'text-[#c0c000]', '均量', '145', 'text-[#c0c000]'],
];

const ticks: [string, string, string][] = [
  ['18:59', '1020', '332'], [':39', '1019', '96'], [':40', '1020', '110'], [':41', '1019', '75'], [':42', '1019', '90'],
  [':43', '1021', '182'], [':44', '1022', '463'], [':45', '1021', '158'], [':46', '1020', '335'], [':47', '1022', '235'],
  [':48', '1022', '186'], [':49', '1020', '210'], [':50', '1020', '74'], [':51', '1018', '254'], [':52', '1018', '187'],
  [':53', '1019', '174'], [':54', '1019', '273'], [':55', '1018', '362'], [':56', '1019', '163'], [':57', '1017', '249'],
  [':58', '1017', '213'], [':59', '1018', '153'], ['19:00', '1018', '257'],
];

const NUM = "font-['Liberation_Sans','Noto_Sans_CJK_SC',sans-serif] text-[14px] font-bold";
const LAB = 'text-[16px] font-normal text-[#c0c0c0]';

function QuoteRow({ r }: { r: [string, string, string, string, string, string] }) {
  return (
    <tr className="h-5 leading-5">
      <th scope="row" className={`w-[50px] p-0 pl-0.5 text-left ${LAB}`}>{r[0]}</th>
      <td className={`w-[162px] p-0 text-right ${NUM} ${r[2]}`}>{r[1]}</td>
      <th scope="row" className={`p-0 pl-[9px] text-left ${LAB}`}>{r[3]}</th>
      <td className={`p-0 pr-[3px] text-right ${NUM} ${r[5]}`}>{r[4]}</td>
    </tr>
  );
}

function QuotePanel() {
  return (
    <section className="flex w-[447px] shrink-0 flex-col border-l border-t border-red-600 bg-black">
      <div className="flex h-7 shrink-0 items-center border-b border-red-600">
        <h2 className="flex-1 whitespace-pre pr-[34px] text-center text-[16px] font-bold leading-6 text-[#ffff00]"><span className="font-['Liberation_Sans'] text-[14px]">TA0006</span>  轧卷板连续.螺纹钢连续</h2>
        <svg viewBox="0 0 15 14" className="mb-1 mr-1.5 h-3.5 w-[15px]"><rect width="15" height="14" fill="#00f020" /><path d="M8.500 2L4.500 7.500H10L6.500 12" fill="none" stroke="#e04000" strokeWidth="1.800" /></svg>
      </div>
      <div className="h-[163px] shrink-0 border-b border-red-600">
        <table className="w-full border-collapse"><tbody>{quotes.map((r) => <QuoteRow key={r[0]} r={r} />)}</tbody></table>
      </div>
      <table className="w-full shrink-0 border-collapse"><tbody><QuoteRow r={['开多', '1018.000', 'text-[#d0d0d0]', '开空', '1018.000', 'text-[#d0d0d0]']} /></tbody></table>
      <div className="mt-auto flex h-[452px] shrink-0 border-t border-red-600">
        <div className="flex-1">
          <table className={`w-full border-collapse ${NUM}`}>
            <tbody>
              {ticks.map(([t, p, v]) => (
                <tr key={t} className={`h-[19px] leading-[18px] ${t === '19:00' ? 'border-t border-dotted border-red-600' : ''}`}>
                  <td className="w-9 p-0 text-right text-[#d0d0d0]">{t}</td>
                  <td className="w-[176px] p-0 text-right text-[#00ff00]">{p}.0000</td>
                  <td className="p-0 pr-[52px] text-right text-[#00ff00]">{v}</td>
                </tr>
              ))}
            </tbody>
          </table>
        </div>
        <div className="flex w-4 flex-col items-center border-x border-red-600">
          <button aria-label="上" className="flex h-4 w-full items-center justify-center border-b border-red-600"><svg viewBox="0 0 8 6" className="h-1.5 w-2"><path d="M4 0l4 6H0z" fill="#f00" /></svg></button>
          <div className="mt-auto flex h-[30px] w-full flex-col items-center justify-center gap-0.5 rounded-md border border-red-600">
            <i className="h-px w-2 bg-red-600" /><i className="h-px w-2 bg-red-600" /><i className="h-px w-2 bg-red-600" /><i className="h-px w-2 bg-red-600" />
          </div>
          <button aria-label="下" className="flex h-4 w-full items-center justify-center"><svg viewBox="0 0 8 6" className="h-1.5 w-2"><path d="M0 0h8L4 6z" fill="#f00" /></svg></button>
        </div>
      </div>
    </section>
  );
}

/* ---------- dialog ---------- */

const BTN = 'flex h-5 items-center justify-center border border-[#adadad] bg-[#e1e1e1]';
const Check = () => <input type="checkbox" className="size-[13px] appearance-none border border-[#333] bg-white" />;
const Radio = ({ on }: { on?: boolean }) => (
  <input type="radio" name="report" defaultChecked={on} className="size-[13px] appearance-none rounded-full border border-[#333] bg-white checked:shadow-[inset_0_0_0_2px_white] checked:bg-[#222]" />
);

function DateSelect({ v, label }: { v: string; label: string }) {
  return (
    <span className="relative">
      <select aria-label={label} className="h-[23px] w-[91px] appearance-none whitespace-pre border border-[#7a7a7a] bg-white pl-0.5"><option>{v}</option></select>
      <svg viewBox="0 0 9 6" className="pointer-events-none absolute right-1 top-[9px] h-1.5 w-[9px]" fill="none" stroke="#555" strokeWidth="1.200"><path d="M.5.8l4 4 4-4" /></svg>
    </span>
  );
}

function TestDialog() {
  return (
    <div role="dialog" aria-label="公式测试系统" className="absolute left-[634px] top-[291px] flex h-[456px] w-[651px] flex-col bg-[#f0f0f0] font-['Liberation_Sans','Noto_Sans_CJK_SC',sans-serif] text-[12px] leading-3 text-black outline outline-[#222]">
      <div className={`flex h-6 shrink-0 items-center bg-white pl-[3px] ${SANS}`}>
        <h2>公式测试系统 - A.新图表交易系统 : ARBTEST</h2>
        <div className="ml-auto mr-[17px] flex items-center gap-[35px]">
          <i className="h-px w-2.5 bg-black" /><i className="size-2.5 border border-[#ccc]" />
          <svg viewBox="0 0 11 11" className="size-[11px]" stroke="#000"><path d="M.5.5l10 10M10.500.5l-10 10" /></svg>
        </div>
      </div>
      <div className={`flex h-[19px] shrink-0 items-center gap-3.5 bg-white pl-1.5 ${SANS}`}><button>文件(F)</button><button>设置(S)</button></div>

      <div className="mt-[13px] flex h-[21px] shrink-0 items-end pl-[5px]">
        <button className="h-[19px] w-[58px] border border-b-0 border-[#dcdcdc]">公式选择</button>
        <button className="z-10 -mb-px h-[22px] w-[63px] border border-b-0 border-[#dcdcdc] bg-white pb-1">测试品种</button>
        <button className="h-[19px] w-[58px] border border-b-0 border-l-0 border-[#dcdcdc]">交易费用</button>
        <button className="h-[19px] w-[59px] border border-b-0 border-l-0 border-[#dcdcdc]">测试报告</button>
      </div>
      <div className="mx-[3px] flex h-[295px] shrink-0 border border-[#dcdcdc] bg-white px-[3px] pt-[7px]">
        <div className="flex flex-1 gap-1 bg-[#f0f0f0] pl-[11px] pr-0.5">
          <div className="w-[173px] pt-[17px]">
            <fieldset className="relative h-[50px] border border-[#dcdcdc] px-[11px] pt-2">
              <legend className="absolute -top-[7px] left-[5px] bg-[#f0f0f0] px-0.5">测试模式</legend>
              <p className="whitespace-nowrap">如果您需要更精细的多品种<br />并行测试，请至后台交易界<br />面使用后台精细测试模式。</p>
            </fieldset>
            <p className="mt-4 whitespace-nowrap text-[#ff0000]"><span className="inline-block w-3" />测试之前请确保测试数据完<br />整，请先在数据维护选项里确认<br />保存长度在所需要范围之内,设置<br />完毕后点数据补充按钮补充数据</p>
            <div className="mt-1.5 flex justify-between pl-2.5">
              <button className={`${BTN} w-[73px]`}>数据维护</button>
              <button className={`${BTN} w-[73px]`}>数据补充</button>
            </div>
            <label className="mt-[43px] flex items-center gap-[3px] pl-[9px]"><Check />多品种测试多核并行(D)</label>
          </div>
          <fieldset className="relative mt-[17px] h-[259px] flex-1 border border-[#dcdcdc] pl-1.5 pr-[3px] pt-2.5">
            <legend className="absolute -top-[7px] left-[5px] bg-[#f0f0f0] px-0.5">测试对象</legend>
            <ul className="h-[218px] border border-[#828790] bg-white px-[5px] pt-[3px]">
              <li className="flex items-center"><b className="w-3.5 text-[13px] leading-3 text-[#ff0000]">S</b>轧卷板连续.螺纹钢连续</li>
            </ul>
            <div className="mt-[5px] flex items-center">
              <label className="flex flex-1 items-center gap-[3px]"><Check />自动添加当前图表品种(A)</label>
              <button className={`${BTN} mr-[23px] w-[73px]`}>全选(L)</button>
              <button className={`${BTN} mr-[13px] w-[73px]`}>加入(D)...</button>
              <button className={`${BTN} mr-[11px] w-[73px]`}>删除(E)</button>
            </div>
          </fieldset>
        </div>
      </div>

      <div className="mt-2 flex h-8 shrink-0 gap-[3px] pl-[3px] pr-px">
        <div className="flex w-[444px] items-center border border-[#a0a0a0] pb-1 pl-1">
          <span className="w-[57px] whitespace-nowrap">测试时段：</span>
          <DateSelect v="2022/  1/  1" label="开始日期" />
          <span className="w-[23px] whitespace-nowrap text-center">一&gt;</span>
          <DateSelect v="2022/12/10" label="结束日期" />
          <label className="ml-2 flex items-center whitespace-nowrap"><span className="w-[82px]">每只品种投入：</span>
            <input defaultValue="100" className="h-[23px] w-[57px] border border-[#7a7a7a] bg-white pb-1 pl-0.5" /></label>
          <span className="ml-[3px]">万</span>
        </div>
        <div className="flex flex-1 items-center justify-between border border-[#a0a0a0] pb-1 pl-2 pr-1.5">
          <label className="flex items-center gap-[3px] whitespace-nowrap"><Radio on />普通测试报告</label>
          <label className="flex items-center gap-[3px] whitespace-nowrap"><Radio />专业测试报告</label>
        </div>
      </div>
      <div className="mt-[18px] flex justify-end gap-8 pr-5">
        <button className={`${BTN} w-[76px]`}>策略优化</button>
        <button className="flex h-5 w-[76px] items-center justify-center border-2 border-[#1f7fd6] bg-[#e1e1e1]">开始测试</button>
      </div>
    </div>
  );
}

/* ---------- status bar ---------- */

function IndexCell({ name, value, amount, dots, pad, text }: { name: string; value: string; amount: string; dots: string; pad: string; text: string }) {
  return (
    <div className={`flex shrink-0 items-center ${pad}`}>
      <span className={`whitespace-pre font-['Noto_Sans','Noto_Sans_CJK_SC',sans-serif] text-[14px] leading-5 ${text}`}>{name} <span className="text-[#f00000]">{value}</span> {amount}</span>
      <div className="w-[150px]">
        <div className="flex h-[11px] border border-black"><i className="flex-1 bg-[#ff0000]" /><i className="flex-1 bg-[#168000]" /></div>
        <div className="mt-0.5 flex justify-between">
          {dots.split('').map((d, i) => <i key={i} className={`h-1 w-2.5 ${d === 'r' ? 'bg-[#ff0000]' : 'bg-[#168000]'}`} />)}
        </div>
      </div>
    </div>
  );
}

function StatusBar() {
  return (
    <div className="relative h-[26px] shrink-0 border-t border-[#a0a0a0] bg-[#f0f0f0] pt-[3px] text-black">
      <div className="flex h-[22px] border-t border-[#888] bg-white">
        <IndexCell name="沪" value="3405.4 +0.53% (+17.79)" amount="4893亿" dots="rgrggrrr" pad="w-[537px] pl-[6px]" text="w-[229px]" />
        <IndexCell name="深" value="13026 +1.29% (+165.89)" amount="6411亿" dots="grgrgrrr" pad="w-[530px]" text="w-[233px]" />
        <IndexCell name="300" value="4496.0 +0.66% (+29.31)" amount="3570亿" dots="ggrggrrr" pad="w-[525px]" text="w-[239px]" />
        <i className="w-[3px] border-x border-[#a0a0a0]" />
        <i className="ml-[83px] w-[3px] border-x border-[#a0a0a0]" />
        <svg viewBox="0 0 16 16" className="ml-1 mt-0.5 size-4"><path d="M5 1h5q1 0 1 1v4q0 1-1 1H6Q4.500 7 4.500 8.500V11H2.500Q1 11 1 9V7q0-2 2-2h5V4H4V2q0-1 1-1z" fill="#111" /><path d="M11 15H6q-1 0-1-1v-4q0-1 1-1h4q1.500 0 1.500-1.500V5h2Q15 5 15 7v2q0 2-2 2H8v1h4v2q0 1-1 1z" fill="#333" /></svg>
        <i className="ml-[7px] w-[3px] border-x border-[#a0a0a0]" />
        <svg viewBox="0 0 14 16" className="ml-1.5 mt-0.5 h-4 w-3.5"><path d="M1 3v10q6 4 12 0V3z" fill="#800000" /><ellipse cx="7" cy="3" rx="6" ry="2.300" fill="#eee" stroke="#800000" /></svg>
        <i className="ml-[7px] w-[3px] border-x border-[#a0a0a0]" />
      </div>
      <div className="absolute -top-[3px] right-0.5 flex h-7 w-[169px] items-center gap-[11px] rounded-[2px] border border-[#ccc] bg-white pl-1 text-[#3f7cf0]">
        <span className="flex size-[22px] shrink-0 items-center justify-center rounded-full border-2 border-[#4a86f7] font-['Liberation_Sans'] text-[8px] font-bold">iFLY</span>
        <span className="text-[17px] font-bold leading-5">英</span>
        <svg viewBox="0 0 14 16" className="h-4 w-3.5 shrink-0" fill="#4a86f7"><circle cx="4" cy="4" r="3.500" /><path d="M8 9a2.600 2.600 0 115 1q0 4-4 5 2-2 1.500-3.500Q8 11 8 9z" /></svg>
        <Mic size={17} className="shrink-0" fill="#4a86f7" strokeWidth={2} />
        <User size={17} className="shrink-0" fill="#4a86f7" strokeWidth={2} />
        <svg viewBox="0 0 14 14" className="size-3.5 shrink-0" fill="#4a86f7"><path d="M0 0h6v6H0zM0 8h6v6H0zM8 8h6v6H8zM11 0l3 3-3 3-3-3z" /></svg>
      </div>
    </div>
  );
}

/* ---------- task bar ---------- */

const T = ({ children }: { children: React.ReactNode }) => <svg viewBox="0 0 16 16" className="size-4">{children}</svg>;

function TaskBar() {
  return (
    <footer className="flex h-10 shrink-0 items-center bg-gradient-to-r from-[#303023] via-[#242720] to-[#1f2425] text-[12px] text-white">
      <button aria-label="开始" className="flex h-full w-[50px] items-center justify-center">
        <svg viewBox="0 0 16 16" className="size-4" fill="#fff"><path d="M0 2.300l6.500-.9v6.200H0zM7.300 1.300L16 0v7.600H7.300zM0 8.400h6.500v6.200L0 13.700zM7.300 8.400H16V16l-8.700-1.300z" /></svg>
      </button>
      <button aria-label="文件资源管理器" className="flex h-full w-[50px] items-center justify-center">
        <svg viewBox="0 0 22 18" className="h-[18px] w-[22px]"><path d="M0 1h8l2 2h12v14H0z" fill="#f6c04c" /><path d="M0 5h22v12H0z" fill="#ffd867" /><path d="M4 18v-8h14v8h-4v-4H8v4z" fill="#2d8fe0" /></svg>
      </button>
      <button className="flex h-full w-[161px] items-center gap-1 border-b-2 border-[#76b9ed] bg-[#55554c] pl-2.5"><AppLogo className="size-6" />金字塔决策交易系...</button>
      <button className="ml-1 flex h-full w-[152px] items-center gap-1 border-b-2 border-[#76b9ed] pl-1.5">
        <svg viewBox="0 0 24 24" className="size-6"><circle cx="12" cy="12" r="11.500" fill="#fff" /><path d="M5 19L15 2l6 3L10 22z" fill="#e00000" /><path d="M3 8l6-5-3 12z" fill="#f00" /></svg>
        金字塔客服等4个会...
      </button>
      <div className="ml-auto flex items-center gap-2">
        <T><rect width="16" height="16" fill="#f8333c" /><path d="M8 4l4 4-4 4-4-4z" fill="#fff" /><path d="M8 4v8" stroke="#f8333c" /></T>
        <T><rect width="16" height="16" fill="#45d16b" /><path d="M3 6q3-3 6 1l3 4M5 10q4 3 7-4" stroke="#fff" fill="none" strokeWidth="1.500" /></T>
        <T><path d="M2 1l13 7-13 7z" fill="#2b9af3" /><path d="M2 8l13 0-13 7z" fill="#f5b800" /><path d="M5 5l6 3-6 3z" fill="#fff" /></T>
        <T><path d="M8 0l7 2v6q0 5-7 8-7-3-7-8V2z" fill="#2463e8" /><circle cx="8" cy="7" r="5" fill="#fff" /><path d="M5 5l3 5 3-5" stroke="#2463e8" fill="none" strokeWidth="2" /></T>
        <T><rect width="16" height="16" rx="3" fill="#ff5a1f" /><path d="M4 4h2l5 4V4h1v8h-2L5 8v4H4z" fill="#fff" stroke="#fff" /></T>
        <T><g fill="#d81e1e"><circle cx="5" cy="8" r="2" /><circle cx="10" cy="3.500" r="1.800" /><circle cx="13" cy="8" r="1.600" /><circle cx="3" cy="12.500" r="1.500" /><circle cx="8" cy="11.500" r="1.800" /><circle cx="13" cy="3" r="1.300" /></g></T>
        <T><rect width="16" height="16" rx="3" fill="#3d8ae6" /><circle cx="8" cy="8" r="5.500" fill="none" stroke="#fff" /><path d="M6.500 5v6M10 5L7 8l3 3" stroke="#fff" fill="none" strokeWidth="1.300" /></T>
        <T><ellipse cx="8" cy="9" rx="6" ry="6.500" fill="#111" /><circle cx="8" cy="4.500" r="4" fill="#111" /><ellipse cx="8" cy="11" rx="4" ry="4" fill="#fff" /><path d="M3 8q5 3 10 0" stroke="#e00" strokeWidth="2" fill="none" /><circle cx="6.500" cy="4" r="1.200" fill="#fff" /><circle cx="9.500" cy="4" r="1.200" fill="#fff" /><path d="M3 15h10" stroke="#f5a800" strokeWidth="2" /></T>
        <T><path d="M1 1h8v7H1zM7 7h8v6H7z" fill="#1450d0" stroke="#ddd" /><path d="M3 10v4h4M10 15h5" stroke="#ddd" fill="none" /></T>
        <T><g fill="none" stroke="#eee" strokeWidth="1.200"><path d="M1.500 15A13 13 0 0114.500 2M5 15a9.500 9.500 0 019.500-9.500M8.500 15a6 6 0 016-6" /><circle cx="13" cy="14" r="1" fill="#fff" /></g></T>
        <Volume2 size={16} strokeWidth={1.6} />
        <span className="text-[16px] font-medium leading-5">英</span>
      </div>
      <time className="ml-3 w-[60px] text-center text-[12px] leading-[19px]">19:17<br />2022/7/4</time>
      <div className="relative ml-4 mr-[9px] h-[22px] w-6">
        <svg viewBox="0 0 24 22" className="size-full"><path d="M2 2h16v13h-5l-3 3v-3H2z" fill="#fff" /><path d="M5 5.500h10M5 8.500h10M5 11.500h7" stroke="#222" /><circle cx="17" cy="15" r="7" fill="#444" stroke="#ccc" /></svg>
        <span className="absolute right-0 top-[7px] w-3.5 text-center text-[11px] font-bold leading-4">2</span>
      </div>
      <i className="mr-1 h-full w-px bg-[#555]" />
    </footer>
  );
}

export default function App() {
  return (
    <div className={`relative flex h-screen flex-col overflow-hidden bg-[#f0f0f0] ${SANS}`}>
      <TitleBar />
      <MenuBar />
      <ToolBar />
      <div className="flex min-h-0 flex-1">
        <LeftStrip />
        <main className="flex min-w-0 flex-1 flex-col border-r border-[#a0a0a0]">
          <TabRow />
          <div className="flex min-h-0 flex-1 pl-1 pr-[3px] pt-px">
            <ChartPanel />
            <QuotePanel />
          </div>
        </main>
        <RightStrip />
      </div>
      <StatusBar />
      <TaskBar />
      <TestDialog />
    </div>
  );
}
